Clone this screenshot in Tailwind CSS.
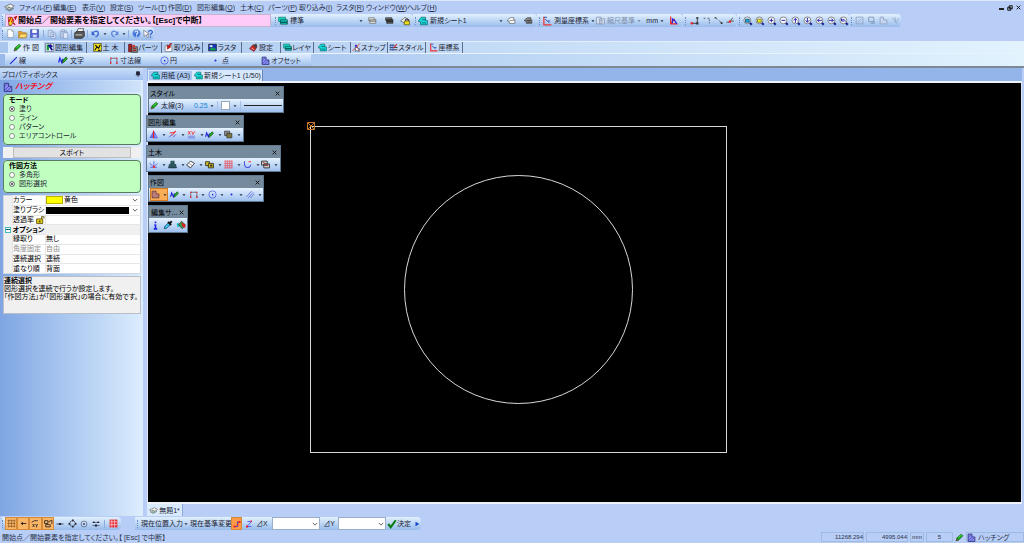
<!DOCTYPE html>
<html lang="ja">

<head>
    <meta charset="UTF-8" />
    <title>無題1 - CAD</title>
    <meta name="viewport" content="width=device-width, initial-scale=1.0" />
    <script src="https://cdn.jsdelivr.net/npm/@tailwindcss/browser@4"></script>
</head>

<body class="h-screen flex flex-col overflow-hidden bg-[#b8cef7] font-['Liberation_Sans','Noto_Sans_CJK_JP',sans-serif] text-[7px] leading-[9px] text-[#1c2433] whitespace-nowrap [font-feature-settings:'palt']">

    <!-- Icon sprite -->
    <svg class="hidden" viewBox="0 0 16 16">
        <symbol id="logo" viewBox="0 0 16 16"><path d="M1 7 9 3l6 3-7 5z" fill="#f4f6ee" stroke="#555"/><path d="m2 10 6 3 6-4M5 7l5 2" fill="none" stroke="#5c7a6c" stroke-width="1.6"/></symbol>
        <symbol id="pencil" viewBox="0 0 16 16"><path d="m2 14 2-6 7-6 3 3-7 7z" fill="#12b012" stroke="#163816"/><path d="m2 14 1-4 3 3z" fill="#f7d38a" stroke="#000" stroke-width=".7"/><path d="m6 8 6-5" stroke="#7bf07b"/></symbol>
        <symbol id="layer" viewBox="0 0 16 16"><path d="M1 2h11v7H1z" fill="#19d3cb" stroke="#075"/><path d="M4 6h11v4H4zM4 10h11v3H4z" fill="#10c4ba" stroke="#043f3c"/></symbol>
        <symbol id="layer-white" viewBox="0 0 16 16"><path d="M1 3h10v5H1z" fill="#eee" stroke="#555"/><path d="M3 6h11v3H3zM3 9h11v4H3z" fill="#e6e4dc" stroke="#555"/></symbol>
        <symbol id="layer-dark" viewBox="0 0 16 16"><path d="M1 3h11v5H1z" fill="#777" stroke="#222"/><path d="M3 6h11v3H3zM3 9h11v4H3z" fill="#555" stroke="#111"/></symbol>
        <symbol id="layer-lock" viewBox="0 0 16 16"><path d="m1 8 7-6 7 5-7 5z" fill="#eee" stroke="#444"/><path d="M7 8h8v6H7z" fill="#f3df17" stroke="#443f00"/><path d="M9 8V5h4v3" fill="none" stroke="#222" stroke-width="1.5"/></symbol>
        <symbol id="sheet" viewBox="0 0 16 16"><path d="m1 7 4-5h7v5h3v7H4V9H1z" fill="#16dcdc" stroke="#055"/><path d="M6 6h6M6 11h7" stroke="#033"/></symbol>
        <symbol id="sheet-white" viewBox="0 0 16 16"><path d="m1 7 5-4h6v4h2v6H4V9H1z" fill="#fff" stroke="#444"/><path d="M5 8h7" stroke="#444"/></symbol>
        <symbol id="sheet-dark" viewBox="0 0 16 16"><path d="m1 7 5-4h6v4h2v6H4V9H1z" fill="#888" stroke="#222"/><path d="M5 8h7M6 11h6" stroke="#111"/></symbol>
        <symbol id="axes" viewBox="0 0 16 16"><path d="M3 1v13h12" fill="none" stroke="#e33" stroke-width="2"/><path d="M3 2h5M5 5l7 6M9 8h4" fill="none" stroke="#35b" stroke-width="1.5"/></symbol>
        <symbol id="axes-zoom" viewBox="0 0 16 16"><path d="M3 1v13h12M3 14l7-9" fill="none" stroke="#e22" stroke-width="2"/><path d="M6 13V5l4 3 4 6" fill="none" stroke="#22d" stroke-width="2"/></symbol>
        <symbol id="scale" viewBox="0 0 16 16"><path d="M1 2h8v12H1zM6 5h9v9H6z" fill="#dce6f5" stroke="#8492ad" stroke-width="1.4"/><path d="M8 8h4v4" fill="none" stroke="#8492ad"/></symbol>
        <symbol id="lens" viewBox="0 0 16 16"><path d="m10 10 4 4" stroke="#1a1a90" stroke-width="3"/><circle cx="7" cy="7" r="5.5" fill="#f2f4fc" stroke="#555"/></symbol>
        <symbol id="new" viewBox="0 0 16 16"><path d="M3 1h7l3 3v11H3z" fill="#fff" stroke="#789"/><path d="M10 1v3h3" fill="none" stroke="#789"/></symbol>
        <symbol id="open" viewBox="0 0 16 16"><path d="M1 4h5l1 2h6v8H1z" fill="#e8a42c" stroke="#a8731c"/><path d="m1 14 3-6h11l-3 6z" fill="#ffdc78" stroke="#a8731c"/></symbol>
        <symbol id="save" viewBox="0 0 16 16"><path d="M1 1h14v14H1z" fill="#5667d5" stroke="#2c3c9c"/><path d="M4 1h8v6H4z" fill="#fff"/><path d="M5 10h7v5H5z" fill="#cdd6f5"/></symbol>
        <symbol id="copy" viewBox="0 0 16 16"><path d="M2 2h6l2 3v7H2zM6 5h6l2 3v7H6z" fill="#cfdef7" stroke="#7d94bd"/><path d="M8 9h4M8 12h4" stroke="#7d94bd"/></symbol>
        <symbol id="paste" viewBox="0 0 16 16"><path d="M2 3h10v11H2z" fill="#b9c8e2" stroke="#7d94bd"/><path d="M5 1h4v3H5zM7 6h7v9H7z" fill="#dbe6f8" stroke="#7d94bd"/></symbol>
        <symbol id="print" viewBox="0 0 16 16"><path d="m4 6 2-5h8l-1 5z" fill="#fff" stroke="#333"/><path d="m1 7 3-2h11v7l-3 3H1z" fill="#555" stroke="#222"/><path d="M2 10h10" stroke="#ccc" stroke-width="1.5"/></symbol>
        <symbol id="undo" viewBox="0 0 16 16"><path d="M3 8c3-6 10-5 10 0 0 3-2 5-5 6" fill="none" stroke="#3a63cf" stroke-width="2.4"/><path d="M1 3v8h7z" fill="#3a63cf"/></symbol>
        <symbol id="redo" viewBox="0 0 16 16"><path d="M13 8C10 2 3 3 3 8c0 3 2 5 5 6" fill="none" stroke="#5f86da" stroke-width="2.4"/><path d="M15 3v8H8z" fill="#5f86da"/></symbol>
        <symbol id="help" viewBox="0 0 16 16"><circle cx="8" cy="8" r="7" fill="#3c74dc" stroke="#a8c2f2"/><path d="M5.500 6c0-4 5-3 5 0 0 2-2.500 2-2.500 4M8 11.500v2" fill="none" stroke="#fff" stroke-width="1.8"/></symbol>
        <symbol id="help-cursor" viewBox="0 0 16 16"><path d="m1 2 1 10 3-3 2 5 2-1-2-5h3z" fill="#fff" stroke="#667"/><path d="M9 5c0-4 6-4 6 0 0 2-3 2-3 5m0 2v2" fill="none" stroke="#3462d0" stroke-width="2"/></symbol>
        <symbol id="prompt" viewBox="0 0 16 16"><path d="M2 2h6l3 6-4 7H3z" fill="#fbd928" stroke="#402" /><path d="m3 9 4-7m0 8 3-5" stroke="#d11" stroke-width="2"/><path d="m11 3 4-2-2 5m-3 5 3 3" fill="none" stroke="#b01010" stroke-width="2"/></symbol>
        <symbol id="line" viewBox="0 0 16 16"><path d="M2 14 14 2" stroke="#22c" stroke-width="1.800"/></symbol>
        <symbol id="text" viewBox="0 0 16 16"><path d="m1 12 2-7 3 7 2-6" fill="none" stroke="#22d" stroke-width="2"/><path d="m7 13 1-5 5-5 2 3-5 5z" fill="#1db01d" stroke="#163816"/></symbol>
        <symbol id="dim" viewBox="0 0 16 16"><path d="M3 14V4h11v10" fill="none" stroke="#667" stroke-width="1.500"/><path d="M2 4h3m7 0h3M3 10v4m11-4v4" stroke="#e22" stroke-width="2"/></symbol>
        <symbol id="circle" viewBox="0 0 16 16"><circle cx="8" cy="8" r="6.500" fill="none" stroke="#4656e0" stroke-width="1.300"/><path d="M7 7h2.500v2.500H7z" fill="#22c"/></symbol>
        <symbol id="point" viewBox="0 0 16 16"><circle cx="8" cy="8" r="1.800" fill="#22d"/></symbol>
        <symbol id="hatch" viewBox="0 0 16 16"><path d="M2 2h7v5h5v8H2z" fill="#8a8ef0" stroke="#2b2b78" stroke-width="1.400"/><path d="m2 8 6-6M2 14 9 7m-3 8 7-7" stroke="#33a"/></symbol>
        <symbol id="hatch-hot" viewBox="0 0 16 16"><path d="M2 2h7v5h5v7H2z" fill="#c88a86" stroke="#53303a" stroke-width="1.300"/><path d="m2 8 6-6M3 13l6-6m-1 7 6-6" stroke="#7d4350"/></symbol>
        <symbol id="edit" viewBox="0 0 16 16"><path d="M1 1h14v14H1z" fill="#e9eefa" stroke="#555"/><path d="M3 3h4v10H3z" fill="#139a3b"/><path d="m6 3 7 10M9 3l4 4" stroke="#12128f" stroke-width="3"/></symbol>
        <symbol id="civil" viewBox="0 0 16 16"><path d="M1 1h14v14H1z" fill="#f4e31b" stroke="#222"/><path d="m3 13 4-6 3 2 3-6M4 4l4 3m1 6h4" fill="none" stroke="#111" stroke-width="2"/></symbol>
        <symbol id="parts" viewBox="0 0 16 16"><path d="M1 2h5v12H1z" fill="#a22" stroke="#400"/><path d="M6 6h9v9H6z" fill="#888" stroke="#222"/><path d="M7 3h4v4H7z" fill="#d33"/><path d="M8 9h5m-5 3h5" stroke="#a11" stroke-width="1.500"/></symbol>
        <symbol id="import" viewBox="0 0 16 16"><path d="M2 5h12v10H2z" fill="#fff" stroke="#555"/><path d="m14 1-4 4 2 2-6 4 0-8 2 2 3-4z" fill="#e11212" stroke="#711"/></symbol>
        <symbol id="raster" viewBox="0 0 16 16"><path d="M1 2h14v12H1z" fill="#1834b8" stroke="#111"/><path d="m2 13 5-6 3 3 2-2 2 5z" fill="#18a545"/><path d="M3 4h5v3H3z" fill="#e8f6fb"/></symbol>
        <symbol id="setting" viewBox="0 0 16 16"><path d="m1 10 6-7 7 4-5 8z" fill="#c62626" stroke="#511"/><path d="m8 3 5-2 2 5-4 3z" fill="#444"/><path d="m4 9 5 3" stroke="#fbb" stroke-width="1.500"/></symbol>
        <symbol id="snap" viewBox="0 0 16 16"><path d="M1 14 14 1M7 3l6 11" stroke="#e33" stroke-width="1.600"/><path d="m6 7 0 8 3-2 2 3 2-1-2-3 3-1z" fill="#fff" stroke="#224"/><circle cx="7" cy="5" r="2" fill="#33c"/></symbol>
        <symbol id="style" viewBox="0 0 16 16"><path d="M1 4h9M1 8h14M1 12h14" stroke="#334" stroke-width="1.600"/><path d="M3 2v10m4-10v12" stroke="#36c" stroke-width="1.500"/><path d="m8 9 6-7" stroke="#c33" stroke-width="2"/></symbol>
        <symbol id="mirror" viewBox="0 0 16 16"><path d="M7 3v11H1z" fill="#5a66e8"/><path d="M9 3v11h6z" fill="#8a94f0" stroke="#44d"/><path d="M8 1v14" stroke="#e22" stroke-width="2"/></symbol>
        <symbol id="trim" viewBox="0 0 16 16"><path d="m2 13 6-6m1 6 5-5" stroke="#44c" stroke-width="1.500"/><path d="M3 5h6l5-3M7 10l7-8" fill="none" stroke="#e22" stroke-width="1.700"/></symbol>
        <symbol id="dim-edit" viewBox="0 0 16 16"><path d="m2 2 4 6m0-6L2 8m6-6 3 6m3-6-4 6" stroke="#e33" stroke-width="1.500"/><path d="M2 11h12M2 14h12" stroke="#44c"/></symbol>
        <symbol id="order" viewBox="0 0 16 16"><path d="M1 2h9v8H1z" fill="#888" stroke="#222"/><path d="M5 6h9v8H5z" fill="#7c7440" stroke="#222"/></symbol>
        <symbol id="rays" viewBox="0 0 16 16"><path d="M8 13 1 5m7 8 1-11M8 13l7-7M2 13h12" stroke="#5360e0" stroke-width="1.500"/><path d="M7 10h4v4H7z" fill="#e33"/></symbol>
        <symbol id="stamp" viewBox="0 0 16 16"><path d="M5 2h6v5H5zM2 8h12v3H2zM1 12h14v2H1z" fill="#2d6d68" stroke="#123"/></symbol>
        <symbol id="book" viewBox="0 0 16 16"><path d="m1 9 7-7 7 4-7 8z" fill="#fff" stroke="#222" stroke-width="1.400"/><path d="m5 6 6 4m-8 0 6 4" stroke="#555"/></symbol>
        <symbol id="rolls" viewBox="0 0 16 16"><path d="M1 3h7v7H1z" fill="#d8c51e" stroke="#333" stroke-width="1.600"/><path d="M6 6h9v8H6z" fill="#c9b61c" stroke="#222" stroke-width="1.400"/><circle cx="11" cy="10" r="2" fill="#333"/></symbol>
        <symbol id="mesh" viewBox="0 0 16 16"><path d="M1 2h14M1 6h14M1 10h14M1 14h14M2 1v14M6 1v14M10 1v14M14 1v14" stroke="#e44c5c" stroke-width="1.300"/></symbol>
        <symbol id="curve" viewBox="0 0 16 16"><path d="M3 2C0 16 13 16 14 8" fill="none" stroke="#4a55e0" stroke-width="1.800"/><path d="M10 3h4" stroke="#e33" stroke-width="2"/></symbol>
        <symbol id="sheets" viewBox="0 0 16 16"><path d="M1 2h10v7H1zM5 7h10v7H5z" fill="#ddd" stroke="#222" stroke-width="1.500"/><path d="m3 4 6 3m-2 3h6" stroke="#a22" stroke-width="1.500"/></symbol>
        <symbol id="parallel" viewBox="0 0 16 16"><path d="M1 12 10 2M4 14 13 4M8 14l7-7" stroke="#5b68d8" stroke-width="1.500"/></symbol>
        <symbol id="info" viewBox="0 0 16 16"><path d="M8 1v3M6 7h2v7m-3 0h6" fill="none" stroke="#2222e0" stroke-width="2.800"/></symbol>
        <symbol id="dropper" viewBox="0 0 16 16"><path d="m2 14 1-4 6-6 3 3-6 6z" fill="#3ac7f2" stroke="#124"/><path d="m8 3 5 5M11 5l3-3" stroke="#111" stroke-width="3"/></symbol>
        <symbol id="bucket" viewBox="0 0 16 16"><path d="M1 6c3-3 4 0 5 5H2z" fill="#2bbcd0"/><path d="m4 7 5-5 6 6-5 6z" fill="#35a04c" stroke="#222"/><path d="m8 4 7 3v6l-5-3z" fill="#d22"/></symbol>
        <symbol id="grid" viewBox="0 0 16 16"><path d="M1 3h14M1 8h14M1 13h14M3 1v14M8 1v14M13 1v14" stroke="#8a5a28" stroke-width="1.300"/></symbol>
        <symbol id="grid-red" viewBox="0 0 16 16"><path d="M1 1h14v14H1z" fill="#e5303a"/><path d="M1 5h14M1 10h14M5 1v14M10 1v14" stroke="#fbd7dc" stroke-width="1.200"/></symbol>
        <symbol id="arrow-left" viewBox="0 0 16 16"><path d="M4 8h9" stroke="#222" stroke-width="1.600"/><path d="M3 8l4-3v6z" fill="#222"/></symbol>
        <symbol id="xy" viewBox="0 0 16 16"><path d="m1 6 5-3h6M3 9l3 5m0-5-3 5m5-5 2 3 2-3m-2 3v3" fill="none" stroke="#222" stroke-width="1.500"/></symbol>
        <symbol id="shapes" viewBox="0 0 16 16"><path d="M1 3h6v5H1zM8 5l6-3v7M3 10h8v4H3z" fill="none" stroke="#222" stroke-width="1.500"/></symbol>
        <symbol id="node" viewBox="0 0 16 16"><path d="M1 8h14" stroke="#223" stroke-width="1.500"/><path d="M6 6h4v4H6z" fill="#223"/></symbol>
        <symbol id="quad" viewBox="0 0 16 16"><circle cx="8" cy="8" r="5" fill="none" stroke="#223"/><path d="M7 1h3v3H7zm0 11h3v3H7zM1 7h3v3H1zm11 0h3v3h-3z" fill="#223"/></symbol>
        <symbol id="center" viewBox="0 0 16 16"><circle cx="8" cy="8" r="6" fill="none" stroke="#334"/><path d="M6.500 6.500h3v3h-3z" fill="#223"/></symbol>
        <symbol id="between" viewBox="0 0 16 16"><path d="M1 5h14M1 11h14" stroke="#334" stroke-width="1.300"/><path d="M2 3h3v3H2zm9 0h3v3h-3zM6 9h4v4H6z" fill="#223"/></symbol>
        <symbol id="step" viewBox="0 0 16 16"><path d="M3 13h10V3" fill="none" stroke="#333" stroke-width="1.600"/><path d="M1 11h4v4H1z" fill="#e22"/><path d="M11 2h4v3h-4zm0 9h4v4h-4z" fill="#333"/></symbol>
        <symbol id="step-hot" viewBox="0 0 16 16"><path d="M3 13h6V4h4" fill="none" stroke="#22d" stroke-width="1.600"/><path d="M1 11h4v4H1zm10-9h4v4h-4zM8 8h3v3H8z" fill="#e22"/></symbol>
        <symbol id="corner" viewBox="0 0 16 16"><path d="M3 4h3m4 0h3v9" fill="none" stroke="#444" stroke-width="1.500" stroke-dasharray="3 2"/></symbol>
        <symbol id="slope" viewBox="0 0 16 16"><path d="m2 3 4 3m3 2 5 5" stroke="#444" stroke-width="1.500"/><path d="M1 2h3v2H1zm11 9h3v3h-3z" fill="#333"/></symbol>
        <symbol id="tangent" viewBox="0 0 16 16"><path d="M1 11h5l6-8m-4 6h6" fill="none" stroke="#444" stroke-width="1.500"/><path d="M5 8h4v4H5z" fill="#e22"/></symbol>
        <symbol id="zline" viewBox="0 0 16 16"><path d="M5 3h8L4 13h9" fill="none" stroke="#33d" stroke-width="1.400"/><path d="M2 11h4v4H2zm9-10h3v3h-3z" fill="#e22"/></symbol>
        <symbol id="check" viewBox="0 0 16 16"><path d="m2 8 4 5 8-11" fill="none" stroke="#0a7d12" stroke-width="3.400"/></symbol>
        <symbol id="unlock" viewBox="0 0 16 16"><path d="M1 7h11v8H1z" fill="#e8cf1b" stroke="#4d4200" stroke-width="1.400"/><path d="M10 7V3h4v3" fill="none" stroke="#665a10" stroke-width="1.800"/><path d="M5 10h3v3H5z" fill="#4d4200"/></symbol>
        <symbol id="frame" viewBox="0 0 16 16"><path d="M2 2h12v12H2zM5 11l6-6" fill="none" stroke="#8ea3c4" stroke-width="1.500"/></symbol>
        <symbol id="screen" viewBox="0 0 16 16"><path d="M3 2h9v8H3zM9 10h4v3H6" fill="none" stroke="#8194b4" stroke-width="1.500"/></symbol>
        <symbol id="region" viewBox="0 0 16 16"><path d="M2 2h6v5h6v7H2z" fill="#c7d6ee" stroke="#8ea3c4" stroke-width="1.500"/></symbol>
        <symbol id="cut" viewBox="0 0 16 16"><path d="m2 3 10 11M7 2l1 10M14 4l-4 6" stroke="#8ea3c4" stroke-width="1.400"/></symbol>
        <symbol id="down" viewBox="0 0 8 8"><path d="M1 2.500h6L4 6z" fill="#222b3a"/></symbol>
        <symbol id="chevron" viewBox="0 0 8 8"><path d="m1 2.500 3 3 3-3" fill="none" stroke="#555" stroke-width="1.200"/></symbol>
        <symbol id="close" viewBox="0 0 8 8"><path d="m1 1 6 6m0-6L1 7" stroke="#111" stroke-width="1.500"/></symbol>
    </svg>

    <!-- Menu bar -->
    <nav class="h-[14px] shrink-0 flex items-center border-t border-[#dce8fc] pl-1 pr-[3px] text-[#28324a]">
        <svg class="size-[11px] mr-1"><use href="#logo" /></svg>
        <button class="w-[34px] text-left">ファイル(<u>F</u>)</button>
        <button class="w-[29px] text-left">編集(<u>E</u>)</button>
        <button class="w-[28px] text-left">表示(<u>V</u>)</button>
        <button class="w-[28px] text-left">設定(<u>S</u>)</button>
        <button class="w-[30px] text-left">ツール(<u>T</u>)</button>
        <button class="w-[29px] text-left">作図(<u>D</u>)</button>
        <button class="w-[43px] text-left">図形編集(<u>Q</u>)</button>
        <button class="w-[28px] text-left">土木(<u>C</u>)</button>
        <button class="w-[31px] text-left">パーツ(<u>P</u>)</button>
        <button class="w-[37px] text-left">取り込み(<u>I</u>)</button>
        <button class="w-[30px] text-left">ラスタ(<u>R</u>)</button>
        <button class="w-[41px] text-left">ウィンドウ(<u>W</u>)</button>
        <button class="text-left">ヘルプ(<u>H</u>)</button>
        <div class="ml-auto flex items-center gap-[3px]">
            <button aria-label="最小化" class="size-[5px] border-b-2 border-[#222]"></button>
            <button aria-label="元に戻す"><svg class="size-[6px]" viewBox="0 0 8 8"><path d="M3 1h4v4H3zM1 3h4v4H1z" fill="none" stroke="#111" stroke-width="1.300" /></svg></button>
            <button aria-label="閉じる"><svg class="size-[5px]"><use href="#close" /></svg></button>
        </div>
    </nav>

    <!-- Prompt, layer, sheet and zoom toolbars -->
    <div class="h-[13px] shrink-0 flex items-stretch pl-[2px]">
        <div class="w-[271px] flex items-stretch bg-linear-to-b from-[#e2f1fe] to-[#98bbeb]">
            <i class="my-[2px] mr-[2px] border-l border-dotted border-[#6c8fc9]"></i>
            <div class="w-[266px] flex items-center gap-px border border-[#c9b4d0] bg-[#ffccf7] pl-px text-[8px] font-bold text-black">
                <svg class="size-[10px]"><use href="#prompt" /></svg>開始点／開始要素を指定してください。【[Esc]で中断】
            </div>
        </div>
        <div class="w-[140px] flex items-center rounded-r-sm bg-linear-to-b from-[#e2f1fe] to-[#98bbeb]">
            <i class="h-2 mx-[2px] border-l border-dotted border-[#6c8fc9]"></i>
            <button class="w-[85px] flex items-center gap-[2px]"><svg class="size-[10px]"><use href="#layer" /></svg>標準<svg class="size-1 ml-auto"><use href="#down" /></svg></button>
            <button class="w-[18px] flex justify-center" aria-label="表示レイヤ"><svg class="size-[9px]"><use href="#layer-white" /></svg></button>
            <button class="w-[16px] flex justify-center" aria-label="非表示レイヤ"><svg class="size-[9px]"><use href="#layer-dark" /></svg></button>
            <button class="w-[16px] flex justify-center" aria-label="レイヤロック"><svg class="size-[10px]"><use href="#layer-lock" /></svg></button>
        </div>
        <div class="w-[124px] flex items-center rounded-r-sm bg-linear-to-b from-[#e2f1fe] to-[#98bbeb]">
            <i class="h-2 mx-[2px] border-l border-dotted border-[#6c8fc9]"></i>
            <button class="w-[85px] flex items-center gap-[2px]"><svg class="size-[10px]"><use href="#sheet" /></svg>新規シート1<svg class="size-1 ml-auto"><use href="#down" /></svg></button>
            <button class="w-[17px] flex justify-center" aria-label="表示シート"><svg class="size-[9px]"><use href="#sheet-white" /></svg></button>
            <button class="w-[16px] flex justify-center" aria-label="非表示シート"><svg class="size-[9px]"><use href="#sheet-dark" /></svg></button>
        </div>
        <div class="w-[146px] flex items-center rounded-r-sm bg-linear-to-b from-[#e2f1fe] to-[#98bbeb]">
            <i class="h-2 mx-[2px] border-l border-dotted border-[#6c8fc9]"></i>
            <button class="w-[54px] flex items-center gap-[2px]"><svg class="size-[10px]"><use href="#axes" /></svg>測量座標系<svg class="size-1"><use href="#down" /></svg></button>
            <button class="w-[45px] flex items-center gap-[2px] text-[#8190aa]" disabled><svg class="size-[9px]"><use href="#scale" /></svg>縮尺基準<svg class="size-1 ml-auto opacity-50"><use href="#down" /></svg></button>
            <button class="w-[23px] flex items-center justify-end gap-[2px]">mm<svg class="size-1"><use href="#down" /></svg></button>
            <button class="w-[19px] flex justify-center" aria-label="座標ズーム"><svg class="size-[9px]"><use href="#axes-zoom" /></svg></button>
        </div>
        <div class="w-[54px] flex items-center rounded-r-sm bg-linear-to-b from-[#e2f1fe] to-[#98bbeb]">
            <i class="h-2 mx-[2px] border-l border-dotted border-[#6c8fc9]"></i>
            <button class="w-[12px] flex justify-center" aria-label="直角"><svg class="size-[9px]"><use href="#step" /></svg></button>
            <button class="w-[12px] flex justify-center" aria-label="角"><svg class="size-[9px]"><use href="#corner" /></svg></button>
            <button class="w-[12px] flex justify-center" aria-label="勾配"><svg class="size-[9px]"><use href="#slope" /></svg></button>
            <button class="w-[12px] flex justify-center" aria-label="接線"><svg class="size-[9px]"><use href="#tangent" /></svg></button>
        </div>
        <div class="w-[113px] flex items-center rounded-r-sm bg-linear-to-b from-[#e2f1fe] to-[#98bbeb]">
            <i class="h-2 mx-[2px] border-l border-dotted border-[#6c8fc9]"></i>
            <button class="w-[12px] flex justify-center" aria-label="全体表示"><svg class="size-[10px]" viewBox="0 0 16 16"><use href="#lens" /><path d="M4 5h6v5H4z" fill="#1ba7d8" stroke="#035" /></svg></button>
            <button class="w-[12px] flex justify-center" aria-label="用紙表示"><svg class="size-[10px]" viewBox="0 0 16 16"><use href="#lens" /><path d="M4 5h6v5H4z" fill="#ece822" stroke="#550" /></svg></button>
            <button class="w-[12px] flex justify-center" aria-label="拡大"><svg class="size-[10px]" viewBox="0 0 16 16"><use href="#lens" /><path d="M4 7h6M7 4v6" stroke="#22a" stroke-width="1.500" /></svg></button>
            <button class="w-[12px] flex justify-center" aria-label="縮小"><svg class="size-[10px]" viewBox="0 0 16 16"><use href="#lens" /><path d="M4 7h6" stroke="#22a" stroke-width="1.500" /></svg></button>
            <button class="w-[12px] flex justify-center" aria-label="上へ"><svg class="size-[10px]" viewBox="0 0 16 16"><use href="#lens" /><path d="M7 11V4M4 7l3-3 3 3" fill="none" stroke="#22a" stroke-width="1.500" /></svg></button>
            <button class="w-[12px] flex justify-center" aria-label="下へ"><svg class="size-[10px]" viewBox="0 0 16 16"><use href="#lens" /><path d="M7 3v7M4 7l3 3 3-3" fill="none" stroke="#22a" stroke-width="1.500" /></svg></button>
            <button class="w-[12px] flex justify-center" aria-label="左へ"><svg class="size-[10px]" viewBox="0 0 16 16"><use href="#lens" /><path d="M11 7H4M7 4 4 7l3 3" fill="none" stroke="#22a" stroke-width="1.500" /></svg></button>
            <button class="w-[12px] flex justify-center" aria-label="右へ"><svg class="size-[10px]" viewBox="0 0 16 16"><use href="#lens" /><path d="M3 7h7M7 4l3 3-3 3" fill="none" stroke="#22a" stroke-width="1.500" /></svg></button>
            <button class="w-[12px] flex justify-center" aria-label="前の表示"><svg class="size-[10px]" viewBox="0 0 16 16"><use href="#lens" /><path d="M4 4v4h4M4 8c1-4 6-3 6 1" fill="none" stroke="#22a" stroke-width="1.500" /></svg></button>
        </div>
        <div class="w-[51px] flex items-center rounded-r-sm bg-linear-to-b from-[#e2f1fe] to-[#98bbeb]">
            <i class="h-2 mx-px border-l border-dotted border-[#6c8fc9]"></i>
            <button class="w-[12px] flex justify-center" aria-label="枠" disabled><svg class="size-[9px]"><use href="#frame" /></svg></button>
            <button class="w-[12px] flex justify-center" aria-label="画面" disabled><svg class="size-[9px]"><use href="#screen" /></svg></button>
            <button class="w-[12px] flex justify-center" aria-label="領域" disabled><svg class="size-[9px]"><use href="#region" /></svg></button>
            <button class="w-[12px] flex justify-center" aria-label="切断" disabled><svg class="size-[9px]"><use href="#cut" /></svg></button>
        </div>
    </div>

    <!-- Standard toolbar -->
    <div class="h-[14px] shrink-0 flex pl-[2px] pb-[1px]">
        <div class="w-[152px] flex items-center rounded-r-sm bg-linear-to-b from-[#e2f1fe] to-[#98bbeb]">
            <i class="h-2 mr-[2px] border-l border-dotted border-[#6c8fc9]"></i>
            <button class="w-[12px] flex justify-center" aria-label="新規"><svg class="size-[9px]"><use href="#new" /></svg></button>
            <button class="w-[12px] flex justify-center" aria-label="開く"><svg class="size-[10px]"><use href="#open" /></svg></button>
            <button class="w-[12px] flex justify-center" aria-label="保存"><svg class="size-[9px]"><use href="#save" /></svg></button>
            <i class="h-2 mx-[2px] border-l border-[#8badde]"></i>
            <button class="w-[12px] flex justify-center" aria-label="コピー"><svg class="size-[10px]"><use href="#copy" /></svg></button>
            <button class="w-[12px] flex justify-center" aria-label="貼り付け"><svg class="size-[10px]"><use href="#paste" /></svg></button>
            <i class="h-2 mx-[1px] border-l border-[#8badde]"></i>
            <button class="w-[14px] flex justify-center" aria-label="印刷"><svg class="size-[11px]"><use href="#print" /></svg></button>
            <i class="h-2 mx-[1px] border-l border-[#8badde]"></i>
            <button class="w-[19px] flex items-center justify-center gap-[3px]" aria-label="元に戻す"><svg class="size-[9px]"><use href="#undo" /></svg><svg class="size-1"><use href="#down" /></svg></button>
            <button class="w-[19px] flex items-center justify-center gap-[3px]" aria-label="やり直し"><svg class="size-[9px]"><use href="#redo" /></svg><svg class="size-1"><use href="#down" /></svg></button>
            <i class="h-2 mx-[1px] border-l border-[#8badde]"></i>
            <button class="w-[12px] flex justify-center" aria-label="ヘルプ"><svg class="size-[9px]"><use href="#help" /></svg></button>
            <button class="w-[12px] flex justify-center" aria-label="状況ヘルプ"><svg class="size-[10px]"><use href="#help-cursor" /></svg></button>
        </div>
    </div>

    <!-- Command tabs -->
    <div class="h-[12px] shrink-0 flex items-stretch border-t border-[#e3effc] bg-linear-to-r from-[#a9c6ee] to-[#e2f3fe] pl-2">
        <button class="w-[36px] flex items-center justify-center gap-[1px] bg-[#d8eafd]"><svg class="size-[9px]"><use href="#pencil" /></svg>作 図</button>
        <button class="w-[43px] flex items-center justify-end gap-[1px] pr-[3px] border-r border-[#5b6d8a]"><svg class="size-[9px]"><use href="#edit" /></svg>図形編集</button>
        <button class="w-[38px] flex items-center justify-center gap-[1px] border-r border-[#5b6d8a]"><svg class="size-[9px]"><use href="#civil" /></svg>土 木</button>
        <button class="w-[37px] flex items-center justify-center border-r border-[#5b6d8a]"><svg class="size-[10px]"><use href="#parts" /></svg>パーツ</button>
        <button class="w-[41px] flex items-center justify-center gap-[1px] border-r border-[#5b6d8a]"><svg class="size-[9px]"><use href="#import" /></svg>取り込み</button>
        <button class="w-[39px] flex items-center justify-center gap-[1px] border-r border-[#5b6d8a]"><svg class="size-[9px]"><use href="#raster" /></svg>ラスタ</button>
        <button class="w-[39px] flex items-center justify-center gap-[1px] border-r border-[#5b6d8a]"><svg class="size-[9px]"><use href="#setting" /></svg>設定</button>
        <button class="w-[33px] flex items-center justify-center border-r border-[#5b6d8a]"><svg class="size-[9px]"><use href="#layer" /></svg>レイヤ</button>
        <button class="w-[37px] flex items-center justify-center gap-[1px] border-r border-[#5b6d8a]"><svg class="size-[9px]"><use href="#sheet" /></svg>シート</button>
        <button class="w-[37px] flex items-center justify-center border-r border-[#5b6d8a]"><svg class="size-[9px]"><use href="#snap" /></svg>スナップ</button>
        <button class="w-[38px] flex items-center justify-center border-r border-[#5b6d8a]"><svg class="size-[9px]"><use href="#style" /></svg>スタイル</button>
        <button class="w-[37px] flex items-center justify-center gap-[1px] border-r border-[#5b6d8a]"><svg class="size-[9px]"><use href="#axes" /></svg>座標系</button>
    </div>
    <div class="h-[15px] shrink-0 flex items-stretch border-t border-b-2 border-t-[#e8f3fd] border-b-[#7e8894] bg-linear-to-r from-[#98b9ea] to-[#e2f3fe] pl-[5px]">
        <div class="w-[306px] flex items-center bg-linear-to-b from-[#deeefe] to-[#a1c1ee] pl-1">
            <button class="w-[49px] flex items-center gap-[1px]"><svg class="size-[9px]"><use href="#line" /></svg>線</button>
            <button class="w-[51px] flex items-center gap-[2px]"><svg class="size-[10px]"><use href="#text" /></svg>文字</button>
            <button class="w-[51px] flex items-center gap-[2px]"><svg class="size-[9px]"><use href="#dim" /></svg>寸法線</button>
            <button class="w-[51px] flex items-center gap-[1px]"><svg class="size-[9px]"><use href="#circle" /></svg>円</button>
            <button class="w-[50px] flex items-center gap-[2px]"><svg class="size-[9px]"><use href="#point" /></svg>点</button>
            <button class="flex items-center gap-[1px]"><svg class="size-[9px]"><use href="#hatch" /></svg>オフセット</button>
        </div>
    </div>

    <main class="flex-1 min-h-0 flex gap-1">
        <!-- Property box -->
        <aside class="w-[143px] shrink-0 flex flex-col bg-linear-to-r from-[#7fa6e3] to-[#dcedfd]">
            <div class="h-[12px] shrink-0 flex items-center justify-between bg-linear-to-b from-[#c9defa] to-[#9fbfee] px-[2px]">
                プロパティボックス
                <button aria-label="固定"><svg class="size-[6px]" viewBox="0 0 8 8"><path d="M2 1h4v4H2zM1 5h6M4 5v3" fill="#223" stroke="#223" /></svg></button>
            </div>
            <div class="flex flex-col gap-[2px] pl-[3px] pr-[2px] pt-[1px]">
                <h2 class="h-[11px] flex items-center gap-[2px] bg-linear-to-r from-[#82a8e5] to-[#cfe3fa] text-[8px] font-bold italic text-[#f01226]"><svg class="size-[10px]"><use href="#hatch" /></svg>ハッチング</h2>
                <fieldset class="rounded border border-[#5c7a62] bg-[#c1ffc0] pl-[5px] pb-1">
                    <legend class="float-left w-full font-bold text-black">モード</legend>
                    <label class="clear-both flex items-center gap-1"><input type="radio" name="mode" checked class="appearance-none size-[6px] rounded-full border border-[#8a938a] bg-white checked:bg-[#222] checked:outline-1 checked:outline-white checked:-outline-offset-2" />塗り</label>
                    <label class="flex items-center gap-1"><input type="radio" name="mode" class="appearance-none size-[6px] rounded-full border border-[#8a938a] bg-white" />ライン</label>
                    <label class="flex items-center gap-1"><input type="radio" name="mode" class="appearance-none size-[6px] rounded-full border border-[#8a938a] bg-white" />パターン</label>
                    <label class="flex items-center gap-1"><input type="radio" name="mode" class="appearance-none size-[6px] rounded-full border border-[#8a938a] bg-white" />エリアコントロール</label>
                </fieldset>
                <div class="bg-[#f0f0f0] px-[10px]">
                    <button class="block w-full border border-[#bdbdbd] bg-[#e2e2e2] text-black">スポイト</button>
                </div>
                <fieldset class="rounded border border-[#5c7a62] bg-[#c1ffc0] pl-[5px] pb-1">
                    <legend class="float-left w-full font-bold text-black">作図方法</legend>
                    <label class="clear-both flex items-center gap-1"><input type="radio" name="method" class="appearance-none size-[6px] rounded-full border border-[#8a938a] bg-white" />多角形</label>
                    <label class="flex items-center gap-1"><input type="radio" name="method" checked class="appearance-none size-[6px] rounded-full border border-[#8a938a] bg-white checked:bg-[#222] checked:outline-1 checked:outline-white checked:-outline-offset-2" />図形選択</label>
                </fieldset>
                <table class="h-[79px] w-full table-fixed border border-[#cfd6df] bg-white text-left leading-[8px] text-black">
                    <colgroup><col class="w-[9px]" /><col class="w-[33px]" /><col /></colgroup>
                    <tr><td class="bg-[#f0f0f0]"></td><td class="border border-[#e6e6e6]"><label for="color">カラー</label></td>
                        <td class="border-b border-[#e6e6e6]"><div class="flex items-center"><span class="w-[17px] h-[8px] shrink-0 border border-[#b8b000] bg-[#ffff00]"></span><select id="color" class="appearance-none flex-1 pl-px"><option>黄色</option></select><svg class="size-[6px] mr-[2px]"><use href="#chevron" /></svg></div></td></tr>
                    <tr><td class="bg-[#f0f0f0]"></td><td class="border border-[#e6e6e6]">塗りブラシ</td>
                        <td class="border-b border-[#e6e6e6]"><div class="flex items-center"><span class="h-[7px] flex-1 bg-black"></span><button aria-label="塗りブラシを選択" class="pl-[3px] pr-[2px]"><svg class="size-[6px]"><use href="#chevron" /></svg></button></div></td></tr>
                    <tr><td class="bg-[#f0f0f0]"></td><td class="border border-[#e6e6e6]"><span class="flex items-center gap-[2px]">透過率 <svg class="size-[9px] -my-px shrink-0"><use href="#unlock" /></svg></span></td><td class="border-b border-[#e6e6e6]"></td></tr>
                    <tr class="bg-[#f0f0f0]"><td><button aria-label="折りたたむ" class="ml-[1px] flex size-[6px] items-center border border-[#4bb] bg-white"><span class="h-px w-full bg-[#167]"></span></button></td><th colspan="2" class="font-bold">オプション</th></tr>
                    <tr><td class="bg-[#f0f0f0]"></td><td class="border border-[#e6e6e6]">縁取り</td><td class="border-b border-[#e6e6e6]">無し</td></tr>
                    <tr class="text-[#8d8d8d]"><td class="bg-[#f0f0f0]"></td><td class="border border-[#e6e6e6]">角度固定</td><td class="border-b border-[#e6e6e6]">自由</td></tr>
                    <tr><td class="bg-[#f0f0f0]"></td><td class="border border-[#e6e6e6]">連続選択</td><td class="border-b border-[#e6e6e6]">連続</td></tr>
                    <tr><td class="bg-[#f0f0f0]"></td><td class="border border-[#e6e6e6]">重なり順</td><td>背面</td></tr>
                </table>
                <div class="h-[38px] border border-[#b9bec8] bg-[#f0f0f0] leading-[8px] text-black">
                    <b class="block">連続選択</b>
                    <p>図形選択を連続で行うか設定します。<br />「作図方法」が「図形選択」の場合に有効です。</p>
                </div>
            </div>
        </aside>

        <!-- Drawing window -->
        <section class="flex-1 min-w-0 flex flex-col pr-[2px]">
            <div class="h-[15px] shrink-0 flex items-stretch border-b-2 border-[#eef3fb] bg-[#93b5ea] pt-[2px] pl-[1px]">
                <button class="w-[45px] flex items-center justify-center gap-[1px] border border-[#dbe8fa] bg-[#a9c6f0]"><svg class="size-[9px]"><use href="#sheet" /></svg>用紙 (A3)</button>
                <button class="w-[70px] flex items-center justify-center gap-[1px] border-r border-[#6c84ab] bg-[#d5e8fc]"><svg class="size-[9px]"><use href="#sheet" /></svg>新規シート1 (1/50)</button>
            </div>
            <div class="relative flex-1 min-h-0 border-x border-[#dfe8f6] bg-black">
                <svg class="absolute inset-0 size-full" fill="none" stroke="#d8d8d8">
                    <rect x="162.500" y="43.500" width="416" height="326" />
                    <circle cx="370.500" cy="206.500" r="114" />
                    <path d="M159.500 39.500h7v7h-7zl7 7m0-7-7 7" stroke="#c87828" />
                </svg>

                <div class="absolute left-0 top-[3px] w-[136px] border border-[#5f7890] bg-[#758a9c]">
                    <div class="h-[12px] flex items-center justify-between pl-[1px] pr-[3px] text-black">スタイル<button aria-label="閉じる"><svg class="size-[5px]"><use href="#close" /></svg></button></div>
                    <div class="h-[13px] flex items-center bg-linear-to-b from-[#e6f2fe] to-[#9fc0ee] px-[1px]">
                        <button class="w-[44px] flex items-center gap-[2px]"><svg class="size-[9px]"><use href="#pencil" /></svg>太線(3)</button>
                        <button class="w-[20px] flex items-center justify-between text-[#1583d6]">0.25<svg class="size-1"><use href="#down" /></svg></button>
                        <i class="h-[10px] mx-[3px] border-l border-[#a5c1e8]"></i>
                        <button class="flex items-center gap-[3px]" aria-label="色"><span class="size-[9px] border border-[#9ab] bg-white"></span><svg class="size-1"><use href="#down" /></svg></button>
                        <i class="h-[10px] mx-[3px] border-l border-[#a5c1e8]"></i>
                        <button class="h-px flex-1 bg-[#222]" aria-label="線種"></button>
                    </div>
                </div>

                <div class="absolute -left-[2px] top-[32px] w-[98px] border border-[#5f7890] bg-[#758a9c]">
                    <div class="h-[12px] flex items-center justify-between pl-[1px] pr-[3px] text-black">図形編集<button aria-label="閉じる"><svg class="size-[5px]"><use href="#close" /></svg></button></div>
                    <div class="h-[13px] grid grid-cols-5 bg-linear-to-b from-[#e6f2fe] to-[#9fc0ee] pl-[2px]">
                        <button class="flex items-center gap-1" aria-label="反転"><svg class="size-[9px]"><use href="#mirror" /></svg><svg class="size-1"><use href="#down" /></svg></button>
                        <button class="flex items-center gap-1" aria-label="トリム"><svg class="size-[9px]"><use href="#trim" /></svg><svg class="size-1"><use href="#down" /></svg></button>
                        <button class="flex items-center gap-1" aria-label="寸法編集"><svg class="size-[9px]"><use href="#dim-edit" /></svg><svg class="size-1"><use href="#down" /></svg></button>
                        <button class="flex items-center gap-1" aria-label="文字編集"><svg class="size-[9px]"><use href="#text" /></svg><svg class="size-1"><use href="#down" /></svg></button>
                        <button class="flex items-center gap-1" aria-label="順序"><svg class="size-[9px]"><use href="#order" /></svg><svg class="size-1"><use href="#down" /></svg></button>
                    </div>
                </div>

                <div class="absolute -left-[2px] top-[62px] w-[135px] border border-[#5f7890] bg-[#758a9c]">
                    <div class="h-[12px] flex items-center justify-between pl-[1px] pr-[3px] text-black">土木<button aria-label="閉じる"><svg class="size-[5px]"><use href="#close" /></svg></button></div>
                    <div class="h-[13px] grid grid-cols-7 bg-linear-to-b from-[#e6f2fe] to-[#9fc0ee] pl-[2px]">
                        <button class="flex items-center gap-1" aria-label="放射"><svg class="size-[9px]"><use href="#rays" /></svg><svg class="size-1"><use href="#down" /></svg></button>
                        <button class="flex items-center gap-1" aria-label="構造物"><svg class="size-[9px]"><use href="#stamp" /></svg><svg class="size-1"><use href="#down" /></svg></button>
                        <button class="flex items-center gap-1" aria-label="図面"><svg class="size-[9px]"><use href="#book" /></svg><svg class="size-1"><use href="#down" /></svg></button>
                        <button class="flex items-center gap-1" aria-label="数量"><svg class="size-[9px]"><use href="#rolls" /></svg><svg class="size-1"><use href="#down" /></svg></button>
                        <button class="flex items-center gap-1" aria-label="メッシュ"><svg class="size-[9px]"><use href="#mesh" /></svg><svg class="size-1"><use href="#down" /></svg></button>
                        <button class="flex items-center gap-1" aria-label="曲線"><svg class="size-[9px]"><use href="#curve" /></svg><svg class="size-1"><use href="#down" /></svg></button>
                        <button class="flex items-center gap-1" aria-label="帳票"><svg class="size-[9px]"><use href="#sheets" /></svg><svg class="size-1"><use href="#down" /></svg></button>
                    </div>
                </div>

                <div class="absolute left-0 top-[92px] w-[116px] border border-[#5f7890] bg-[#758a9c]">
                    <div class="h-[12px] flex items-center justify-between pl-[1px] pr-[3px] text-black">作図<button aria-label="閉じる"><svg class="size-[5px]"><use href="#close" /></svg></button></div>
                    <div class="h-[13px] grid grid-cols-6 gap-[1px] bg-linear-to-b from-[#e6f2fe] to-[#9fc0ee] pl-[1px]">
                        <button class="flex items-center justify-center gap-[3px] border border-[#d07b22] bg-[#fbac57]" aria-label="ハッチング"><svg class="size-[9px]"><use href="#hatch-hot" /></svg><svg class="size-1"><use href="#down" /></svg></button>
                        <button class="flex items-center justify-center gap-[3px]" aria-label="文字"><svg class="size-[9px]"><use href="#text" /></svg><svg class="size-1"><use href="#down" /></svg></button>
                        <button class="flex items-center justify-center gap-[3px]" aria-label="寸法線"><svg class="size-[9px]"><use href="#dim" /></svg><svg class="size-1"><use href="#down" /></svg></button>
                        <button class="flex items-center justify-center gap-[3px]" aria-label="円"><svg class="size-[9px]"><use href="#circle" /></svg><svg class="size-1"><use href="#down" /></svg></button>
                        <button class="flex items-center justify-center gap-[3px]" aria-label="点"><svg class="size-[9px]"><use href="#point" /></svg><svg class="size-1"><use href="#down" /></svg></button>
                        <button class="flex items-center justify-center gap-[3px]" aria-label="平行線"><svg class="size-[9px]"><use href="#parallel" /></svg><svg class="size-1"><use href="#down" /></svg></button>
                    </div>
                </div>

                <div class="absolute left-0 top-[122px] w-[40px] border border-[#5f7890] bg-[#758a9c]">
                    <div class="h-[12px] flex items-center justify-between pl-[2px] pr-[3px] text-black">編集サ...<button aria-label="閉じる"><svg class="size-[5px]"><use href="#close" /></svg></button></div>
                    <div class="h-[14px] grid grid-cols-3 place-items-center bg-linear-to-b from-[#e6f2fe] to-[#9fc0ee]">
                        <button aria-label="情報"><svg class="size-[9px]"><use href="#info" /></svg></button>
                        <button aria-label="スポイト"><svg class="size-[10px]"><use href="#dropper" /></svg></button>
                        <button aria-label="塗りつぶし"><svg class="size-[10px]"><use href="#bucket" /></svg></button>
                    </div>
                </div>
            </div>
            <div class="h-[14px] shrink-0 border-t-2 border-[#eef3fb]">
                <button class="w-[36px] h-full flex items-center justify-center gap-[1px] border-r border-[#8ea9d6] bg-[#d9eafc]"><svg class="size-[9px]"><use href="#logo" /></svg>無題1*</button>
            </div>
        </section>
    </main>

    <!-- Snap and coordinate input toolbars -->
    <div class="h-[15px] shrink-0 flex items-stretch gap-[14px] pl-[2px] py-px">
        <div class="w-[119px] flex items-center rounded-r-sm bg-linear-to-b from-[#e2f1fe] to-[#98bbeb]">
            <i class="h-2 mr-[2px] border-l border-dotted border-[#6c8fc9]"></i>
            <button class="h-full w-[12px] flex items-center justify-center border border-[#d58a37] bg-[#fbb566]" aria-label="グリッド"><svg class="size-[9px]"><use href="#grid" /></svg></button>
            <button class="h-full w-[12px] flex items-center justify-center border border-[#d58a37] bg-[#fbb566]" aria-label="端点"><svg class="size-[9px]"><use href="#arrow-left" /></svg></button>
            <button class="h-full w-[13px] flex items-center justify-center border border-[#d58a37] bg-[#fbb566]" aria-label="座標"><svg class="size-[9px]"><use href="#xy" /></svg></button>
            <button class="h-full w-[12px] flex items-center justify-center border border-[#d58a37] bg-[#fbb566]" aria-label="図形"><svg class="size-[9px]"><use href="#shapes" /></svg></button>
            <button class="w-[12px] flex justify-center" aria-label="線上"><svg class="size-[8px]"><use href="#node" /></svg></button>
            <button class="w-[12px] flex justify-center" aria-label="四半円"><svg class="size-[9px]"><use href="#quad" /></svg></button>
            <button class="w-[12px] flex justify-center" aria-label="中心"><svg class="size-[8px]"><use href="#center" /></svg></button>
            <button class="w-[12px] flex justify-center" aria-label="中点"><svg class="size-[8px]"><use href="#between" /></svg></button>
            <i class="h-2 mx-[2px] border-l border-[#8badde]"></i>
            <button class="w-[13px] flex justify-center" aria-label="グリッド設定"><svg class="size-[9px]"><use href="#grid-red" /></svg></button>
        </div>
        <div class="w-[286px] flex items-center rounded-r-sm bg-linear-to-b from-[#e2f1fe] to-[#98bbeb]">
            <i class="h-2 ml-[2px] mr-[3px] border-l border-dotted border-[#6c8fc9]"></i>
            <button class="w-[49px] flex items-center gap-[1px]">現在位置入力<svg class="size-1"><use href="#down" /></svg></button>
            <button class="w-[41px] text-left">現在基準変更</button>
            <button class="h-full w-[11px] flex items-center justify-center border border-[#d58a37] bg-[#fb9a48]" aria-label="相対座標"><svg class="size-[8px]"><use href="#step-hot" /></svg></button>
            <button class="w-[14px] flex justify-center" aria-label="極座標"><svg class="size-[8px]"><use href="#zline" /></svg></button>
            <label for="dx" class="w-[16px]">⊿X</label>
            <div class="relative w-[48px] h-full">
                <select id="dx" class="appearance-none size-full border border-[#98aecb] bg-white"></select>
                <svg class="absolute right-[2px] top-[4px] size-[6px] pointer-events-none"><use href="#chevron" /></svg>
            </div>
            <label for="dy" class="w-[18px] text-center">⊿Y</label>
            <div class="relative w-[48px] h-full">
                <select id="dy" class="appearance-none size-full border border-[#98aecb] bg-white"></select>
                <svg class="absolute right-[2px] top-[4px] size-[6px] pointer-events-none"><use href="#chevron" /></svg>
            </div>
            <button class="flex items-center pl-[1px]"><svg class="size-[10px]"><use href="#check" /></svg>決定</button>
            <svg class="size-[6px] ml-[3px]" viewBox="0 0 8 8"><path d="M2 1v6l5-3z" fill="#14c" /></svg>
        </div>
    </div>

    <!-- Status bar -->
    <footer class="h-[12px] shrink-0 flex items-center gap-[2px] pl-[2px] text-[#28324a]">
        開始点／開始要素を指定してください。【 [Esc] で中断】
        <span class="ml-auto w-[43px] h-[10px] border border-[#a0bbe2] text-right text-[6px]">11268.294</span>
        <span class="w-[42px] h-[10px] border border-[#a0bbe2] text-right text-[6px]">4995.044</span>
        <span class="w-[14px] h-[10px] border border-[#a0bbe2] text-center text-[6px]">mm</span>
        <span class="w-[27px] h-[10px] border border-[#a0bbe2] text-center text-[6px]">5</span>
        <svg class="size-[9px]"><use href="#pencil" /></svg>
        <span class="w-[58px] h-[10px] flex items-center gap-[2px] border border-[#a0bbe2]"><svg class="size-[9px]"><use href="#hatch" /></svg>ハッチング</span>
    </footer>
</body>

</html>
